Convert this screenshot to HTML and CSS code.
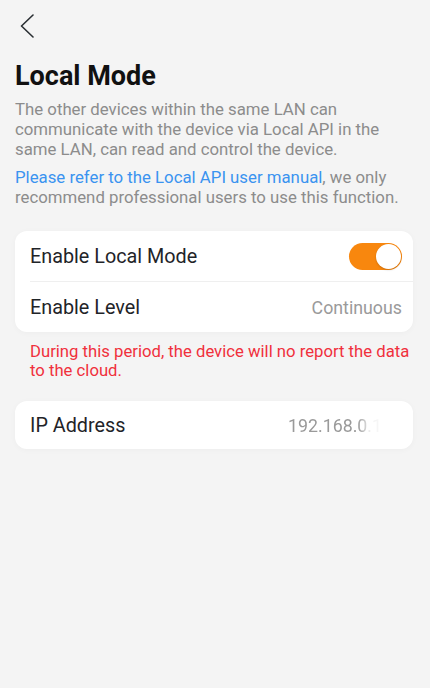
FILE: index.html
```html
<!DOCTYPE html>
<html lang="en">
<head>
<meta charset="utf-8">
<link rel="stylesheet" href="styles.css">
</head>
<body>
<div class="page">
  <div class="topbar">
    <svg class="back" width="16" height="24" viewBox="0 0 16 24"><path d="M14 1 L2.5 12 L14 23" fill="none" stroke="#2a2f33" stroke-width="1.6" stroke-linecap="round" stroke-linejoin="round"/></svg>
  </div>
  <h1 class="title">Local Mode</h1>
  <p class="desc">The other devices within the same LAN can communicate with the device via Local API in the same LAN, can read and control the device.</p>
  <p class="desc desc2"><span class="link">Please refer to the Local API user manual</span><span>, we only</span> <span>recommend professional users to use this function.</span></p>

  <div class="card">
    <div class="row">
      <span class="label">Enable Local Mode</span>
      <span class="toggle"><span class="knob"></span></span>
    </div>
    <div class="divider"></div>
    <div class="row">
      <span class="label">Enable Level</span>
      <span class="value">Continuous</span>
    </div>
  </div>
  <p class="warn">During this period, the device will no report the data to the cloud.</p>

  <div class="card card-ip">
    <div class="row row-ip">
      <span class="label">IP Address</span>
      <span class="value ip">192.168.0.1</span>
    </div>
  </div>
</div>
</body>
</html>
```

FILE: styles.css
```css
html, body {
  margin: 0;
  padding: 0;
  background: #f4f4f4;
}
body {
  font-family: Roboto, "Noto Sans", sans-serif;
  width: 430px;
  height: 688px;
  overflow: hidden;
}
.page {
  padding: 0 17px 0 15px;
}
.topbar {
  display: flex;
  align-items: center;
  padding: 14px 0 0 4px;
}
.back {
  display: block;
}
.title {
  margin: 21px 0 0;
  font-size: 27px;
  font-weight: 700;
  color: #111;
  line-height: 34px;
}
.desc {
  margin: 6px 0 0;
  font-size: 16.8px;
  line-height: 20px;
  color: #8c8c8c;
}
.desc2 {
  margin-top: 8px;
}
.link {
  color: #3a93f0;
}
.card {
  margin-top: 24px;
  background: #fff;
  border-radius: 12px;
  box-shadow: 0 1px 6px rgba(0,0,0,0.03);
}
.row {
  display: flex;
  align-items: center;
  justify-content: space-between;
  height: 50px;
  padding: 0 11px 0 15px;
}
.divider {
  height: 1px;
  background: #efefef;
  margin-left: 15px;
}
.label {
  font-size: 19.8px;
  color: #1f2428;
}
.value {
  font-size: 17.8px;
  color: #9a9a9a;
}
.toggle {
  width: 53px;
  height: 27px;
  border-radius: 14px;
  background: #f8870e;
  display: flex;
  align-items: center;
  justify-content: flex-end;
  padding: 0 1px;
  box-sizing: border-box;
}
.knob {
  width: 25px;
  height: 25px;
  border-radius: 50%;
  background: #fff;
  box-shadow: 0 1px 2px rgba(0,0,0,0.18);
}
.warn {
  margin: 10px 0 0;
  padding-left: 15px;
  font-size: 16.7px;
  line-height: 19px;
  color: #f0303c;
}
.card-ip {
  margin-top: 21px;
}
.row-ip {
  height: 48px;
}
.ip {
  width: 114px;
  white-space: nowrap;
  overflow: hidden;
  -webkit-mask-image: linear-gradient(90deg, #000 0, #000 70px, rgba(0,0,0,0.15) 82px, rgba(0,0,0,0) 100px);
  mask-image: linear-gradient(90deg, #000 0, #000 70px, rgba(0,0,0,0.15) 82px, rgba(0,0,0,0) 100px);
}
```
